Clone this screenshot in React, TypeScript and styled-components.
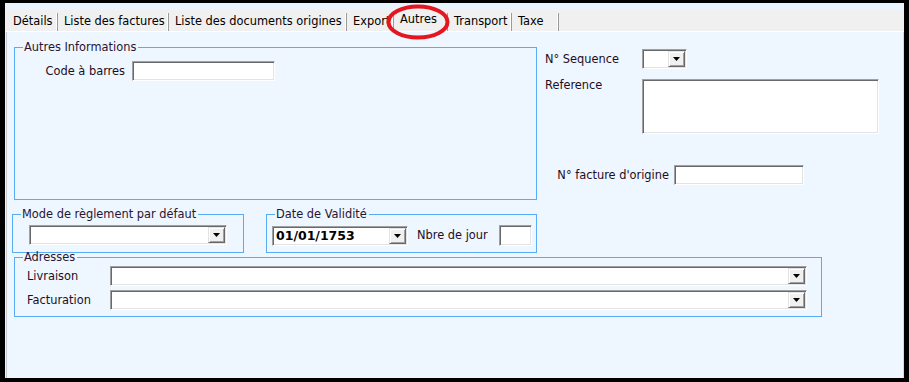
import React from 'react';
import styled, { createGlobalStyle } from 'styled-components';

const Global = createGlobalStyle`
  html, body { margin: 0; padding: 0; background: #000; height: 100%; }
  body { font-family: "DejaVu Sans", Verdana, sans-serif; font-size: 11.4px; color: #1f0d24; }
  #root { height: 100%; }
  * { box-sizing: border-box; }
`;

const Page = styled.div`
  padding: 3px 0 0 5px;
`;

const Frame = styled.div`
  position: relative;
  width: 899px;
  height: 375px;
  background: #eaf4fe;
  padding: 7px 0 0 1px;
  display: flex;
  flex-direction: column;
`;

const TabBar = styled.div`
  display: flex;
  height: 22px;
  background: #f0f0f0;
  border-bottom: 1px solid #ffffff;
  padding-left: 1px;
`;

const Tab = styled.div<{ $w: number; $active?: boolean }>`
  position: relative;
  width: ${(p) => p.$w}px;
  padding: ${(p) => (p.$active ? '3px' : '5px')} 0 0 6px;
  line-height: 13px;
  color: #000;
  white-space: nowrap;
  overflow: hidden;
  &::after {
    content: '';
    position: absolute;
    right: 0;
    top: 3px;
    bottom: 0;
    width: 1px;
    background: #9a9a9a;
    box-shadow: -1px 0 0 #ffffff;
  }
`;

const Marker = styled.svg`
  position: absolute;
  left: 381px;
  top: 1px;
  pointer-events: none;
`;

const Panel = styled.div`
  flex: 1;
  background: #eef6ff;
  border-left: 1px solid #c8ccd0;
  border-right: 1px solid #d6dadf;
  padding: 9px 0 0 7px;
  display: flex;
  flex-direction: column;
`;

const TopRow = styled.div`
  display: flex;
  align-items: flex-start;
`;

const Group = styled.fieldset<{ $w: number; $h: number }>`
  margin: 0;
  padding: 0;
  min-width: 0;
  width: ${(p) => p.$w}px;
  height: ${(p) => p.$h}px;
  border: 1px solid #58acf6;
`;

const Legend = styled.legend`
  margin-left: 8px;
  padding: 0 2px 0 1px;
  line-height: 13px;
  font-size: 11.4px;
  color: #2a1430;
`;

const FieldRow = styled.div<{ $mt?: number; $align?: string }>`
  display: flex;
  align-items: ${(p) => p.$align ?? 'center'};
  margin-top: ${(p) => p.$mt ?? 0}px;
`;

const Label = styled.div<{ $w?: number; $right?: boolean; $gap?: number; $ml?: number }>`
  width: ${(p) => (p.$w ? `${p.$w}px` : 'auto')};
  flex: ${(p) => (p.$w ? 'none' : '1')};
  text-align: ${(p) => (p.$right ? 'right' : 'left')};
  margin-right: ${(p) => p.$gap ?? 0}px;
  margin-left: ${(p) => p.$ml ?? 0}px;
  line-height: 13px;
  white-space: nowrap;
  color: #1f0d24;
`;

const Sunken = styled.div<{ $w: number; $h?: number }>`
  width: ${(p) => p.$w}px;
  height: ${(p) => p.$h ?? 20}px;
  flex: none;
  background: #ffffff;
  border: 1px solid;
  border-color: #a0a0a0 #ffffff #ffffff #a0a0a0;
  box-shadow: inset 1px 1px 0 #696969, inset -1px -1px 0 #e3e3e3;
`;

const Combo = styled(Sunken)`
  display: flex;
  padding: 1px;
`;

const ComboText = styled.div<{ $bold?: boolean }>`
  flex: 1;
  display: flex;
  align-items: center;
  padding-left: 2px;
  font-weight: ${(p) => (p.$bold ? 700 : 400)};
  font-size: ${(p) => (p.$bold ? '12.5px' : '11.4px')};
  color: #000;
`;

const DropButton = styled.div`
  width: 17px;
  flex: none;
  background: #f0f0f0;
  border: 1px solid;
  border-color: #e3e3e3 #696969 #696969 #e3e3e3;
  box-shadow: inset 1px 1px 0 #ffffff, inset -1px -1px 0 #a0a0a0;
  display: flex;
  align-items: center;
  justify-content: center;
`;

const RightCol = styled.div`
  margin-left: 8px;
  display: flex;
  flex-direction: column;
`;

const GroupBody = styled.div<{ $pad: string }>`
  padding: ${(p) => p.$pad};
  display: flex;
  flex-direction: column;
  gap: 4px;
`;

const MidRow = styled.div`
  display: flex;
  gap: 22px;
  margin: 8px 0 0 -2px;
`;

const AddrWrap = styled.div`
  margin-top: -2px;
`;

const Arrow = () => (
  <svg width="7" height="4" viewBox="0 0 7 4">
    <polygon points="0,0 7,0 3.5,4" fill="#000" />
  </svg>
);

const ComboBox: React.FC<{ w: number; value?: string; bold?: boolean }> = ({ w, value, bold }) => (
  <Combo $w={w}>
    <ComboText $bold={bold}>{value}</ComboText>
    <DropButton>
      <Arrow />
    </DropButton>
  </Combo>
);

const tabs = [
  { label: 'Détails', w: 51 },
  { label: 'Liste des factures', w: 111 },
  { label: 'Liste des documents origines', w: 178 },
  { label: 'Export', w: 47 },
  { label: 'Autres', w: 54, active: true },
  { label: 'Transport', w: 64 },
  { label: 'Taxe', w: 47 },
];

export default function App() {
  return (
    <>
      <Global />
      <Page>
        <Frame>
          <TabBar>
            {tabs.map((t) => (
              <Tab key={t.label} $w={t.w} $active={t.active}>
                {t.label}
              </Tab>
            ))}
          </TabBar>
          <Panel>
            <TopRow>
              <Group $w={523} $h={159}>
                <Legend>Autres Informations</Legend>
                <FieldRow $mt={7}>
                  <Label $w={110} $right $gap={7}>Code à barres</Label>
                  <Sunken $w={143} />
                </FieldRow>
              </Group>
              <RightCol>
                <FieldRow $mt={8}>
                  <Label $w={97}>N° Sequence</Label>
                  <ComboBox w={45} />
                </FieldRow>
                <FieldRow $mt={10} $align="flex-start">
                  <Label $w={97}>Reference</Label>
                  <Sunken $w={237} $h={55} />
                </FieldRow>
                <FieldRow $mt={31}>
                  <Label $w={124} $right $gap={5}>N° facture d'origine</Label>
                  <Sunken $w={130} />
                </FieldRow>
              </RightCol>
            </TopRow>

            <MidRow>
              <Group $w={232} $h={45}>
                <Legend>Mode de règlement par défaut</Legend>
                <GroupBody $pad="4px 0 0 16px">
                  <ComboBox w={198} />
                </GroupBody>
              </Group>
              <Group $w={271} $h={45}>
                <Legend>Date de Validité</Legend>
                <GroupBody $pad="4px 4px 0 5px">
                  <FieldRow>
                    <ComboBox w={136} value="01/01/1753" bold />
                    <Label $gap={9} $ml={9}>Nbre de jour</Label>
                    <Sunken $w={33} $h={21} />
                  </FieldRow>
                </GroupBody>
              </Group>
            </MidRow>

            <AddrWrap>
              <Group $w={808} $h={66}>
                <Legend>Adresses</Legend>
                <GroupBody $pad="2px 14px 0 12px">
                  <FieldRow>
                    <Label $w={83}>Livraison</Label>
                    <ComboBox w={697} />
                  </FieldRow>
                  <FieldRow>
                    <Label $w={83}>Facturation</Label>
                    <ComboBox w={697} />
                  </FieldRow>
                </GroupBody>
              </Group>
            </AddrWrap>
          </Panel>
          <Marker width="64" height="36" viewBox="0 0 64 36">
            <ellipse cx="32" cy="18" rx="29.5" ry="15.5" fill="none" stroke="#e4161f" strokeWidth="4" />
          </Marker>
        </Frame>
      </Page>
    </>
  );
}
